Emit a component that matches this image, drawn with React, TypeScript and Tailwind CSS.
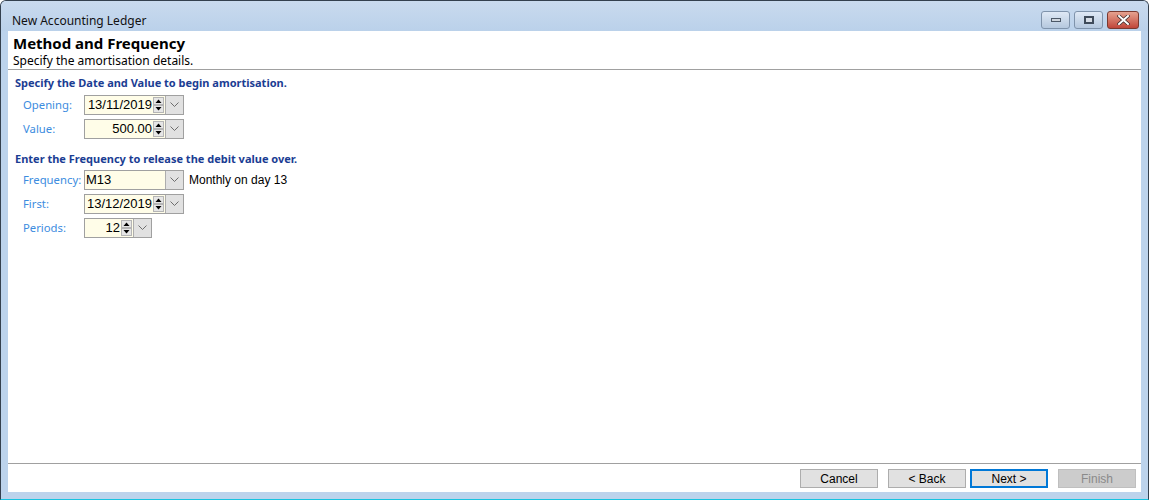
import React from 'react';

const ui = { fontFamily: '"Noto Sans", "Open Sans", sans-serif' };
const ms = { fontFamily: '"Liberation Sans", Arial, sans-serif' };

// Small chevron used in the dropdown buttons
const Chevron = () => (
  <svg width="9" height="6" viewBox="0 0 9 6">
    <path d="M0.5 0.5 L4.5 4.5 L8.5 0.5" fill="none" stroke="#6d6d6d" strokeWidth="1" />
  </svg>
);

const Spinner = () => (
  <div className="flex flex-col w-[11px] h-[18px] justify-between py-[1px]">
    <div className="h-[8px] bg-[#e6e6e6] border border-[#b5b5b5] flex items-center justify-center">
      <svg width="7" height="4" viewBox="0 0 7 4">
        <path d="M0.5 4 L3.5 0.5 L6.5 4 Z" fill="#000" />
      </svg>
    </div>
    <div className="h-[8px] bg-[#e6e6e6] border border-[#b5b5b5] flex items-center justify-center">
      <svg width="7" height="4" viewBox="0 0 7 4">
        <path d="M0.5 0 L3.5 3.5 L6.5 0 Z" fill="#000" />
      </svg>
    </div>
  </div>
);

const DropButton = () => (
  <div className="w-[18px] h-full bg-[#e1e1e1] border-l border-[#adadad] flex items-center justify-center">
    <Chevron />
  </div>
);

const SpinField = ({ value, width }: { value: string; width: string }) => (
  <div className={`${width} h-[20px] border border-[#a0a0a0] bg-[#fffde8] flex items-stretch`}>
    <div className="flex-1 flex items-center justify-end pr-[1px] text-[13px] text-black" style={ms}>
      {value}
    </div>
    <Spinner />
    <div className="w-[1px]" />
    <DropButton />
  </div>
);

const Row = ({ label, children }: { label: string; children: React.ReactNode }) => (
  <div className="flex items-center h-[20px]">
    <div className="w-[61px] text-[11.3px] text-[#3c8ce0]" style={ui}>
      {label}
    </div>
    {children}
  </div>
);

const WinButton = ({ label, className }: { label: string; className: string }) => (
  <div
    className={`w-[78px] h-[19px] flex items-center justify-center text-[12px] ${className}`}
    style={ms}
  >
    {label}
  </div>
);

const App = () => {
  return (
    <div className="w-[1149px] h-[500px] bg-[#bcd3ec] border border-[#34404e] border-b-[#17c3e0] rounded-t-[6px] flex flex-col overflow-hidden">
      {/* Title bar */}
      <div className="h-[30px] flex items-start bg-gradient-to-b from-[#c9daee] to-[#bad1ea] shrink-0">
        <div className="pl-[11px] pt-[11px] text-[12px] text-[#111]" style={ui}>
          New Accounting Ledger
        </div>
        <div className="ml-auto flex gap-[4px] mt-[10px] mr-[9px]">
          <div className="w-[29px] h-[18px] rounded-[3px] border border-[#7f93ab] bg-gradient-to-b from-[#dfe9f5] to-[#b5c8de] flex items-center justify-center">
            <div className="w-[10px] h-[4px] bg-[#cfd6de] border border-[#4c5867]" />
          </div>
          <div className="w-[29px] h-[18px] rounded-[3px] border border-[#7f93ab] bg-gradient-to-b from-[#dfe9f5] to-[#b5c8de] flex items-center justify-center">
            <div className="w-[10px] h-[8px] border-[2px] border-[#3f4b5a] bg-[#d6dde6]" />
          </div>
          <div className="w-[32px] h-[18px] rounded-[3px] border border-[#7a3a30] bg-gradient-to-b from-[#e5a18f] to-[#c0453a] flex items-center justify-center">
            <svg width="13" height="10" viewBox="0 0 13 10">
              <path d="M2 1 L11 9 M11 1 L2 9" stroke="#3b2a2a" strokeWidth="3.4" strokeLinecap="square" />
              <path d="M2 1 L11 9 M11 1 L2 9" stroke="#ffffff" strokeWidth="2" strokeLinecap="square" />
            </svg>
          </div>
        </div>
      </div>

      {/* Client area */}
      <div className="flex-1 mx-[7px] mb-[7px] bg-white flex flex-col">
        {/* Header */}
        <div className="h-[39px] border-b border-[#a0a0a0] pl-[5px] pt-[3px]">
          <div className="text-[15px] font-bold leading-[19px] text-black" style={ui}>
            Method and Frequency
          </div>
          <div className="text-[12px] leading-[15px] text-black" style={ui}>
            Specify the amortisation details.
          </div>
        </div>

        {/* Body */}
        <div className="flex-1 pl-[7px] pt-[4px]">
          <div className="text-[11px] font-bold text-[#1b3d93] leading-[17px]" style={ui}>
            Specify the Date and Value to begin amortisation.
          </div>
          <div className="pl-[8px] pt-[4px] flex flex-col gap-[4px]">
            <Row label="Opening:">
              <SpinField value="13/11/2019" width="w-[100px]" />
            </Row>
            <Row label="Value:">
              <SpinField value="500.00" width="w-[100px]" />
            </Row>
          </div>

          <div className="text-[11px] font-bold text-[#1b3d93] leading-[17px] mt-[11px]" style={ui}>
            Enter the Frequency to release the debit value over.
          </div>
          <div className="pl-[8px] pt-[3px] flex flex-col gap-[4px]">
            <Row label="Frequency:">
              <div className="w-[100px] h-[20px] border border-[#a0a0a0] bg-[#fffde8] flex items-stretch">
                <div className="flex-1 flex items-center pl-[1px] text-[13px] text-black" style={ms}>
                  M13
                </div>
                <DropButton />
              </div>
              <div className="ml-[5px] text-[12px] text-black" style={ms}>
                Monthly on day 13
              </div>
            </Row>
            <Row label="First:">
              <SpinField value="13/12/2019" width="w-[100px]" />
            </Row>
            <Row label="Periods:">
              <SpinField value="12" width="w-[68px]" />
            </Row>
          </div>
        </div>

        {/* Footer */}
        <div className="h-[29px] border-t border-[#a0a0a0] flex items-start justify-end pt-[5px] pr-[5px]">
          <div className="flex">
            <WinButton label="Cancel" className="bg-[#e1e1e1] border border-[#adadad] text-black" />
            <div className="w-[10px]" />
            <WinButton label="< Back" className="bg-[#e1e1e1] border border-[#adadad] text-black" />
            <div className="w-[4px]" />
            <WinButton label="Next >" className="bg-[#e1e1e1] border-2 border-[#0078d7] text-black" />
            <div className="w-[10px]" />
            <WinButton label="Finish" className="bg-[#cccccc] border border-[#bfbfbf] text-[#8a8a8a]" />
          </div>
        </div>
      </div>
    </div>
  );
};

export default App;
